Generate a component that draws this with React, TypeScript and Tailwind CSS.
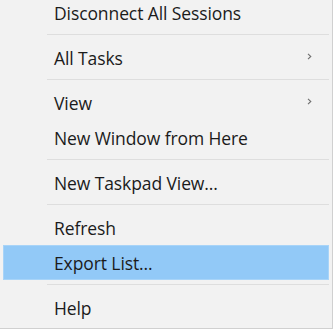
import React from "react";

type Entry = { label: string; sub?: boolean; active?: boolean } | "sep";

const entries: Entry[] = [
  { label: "Disconnect All Sessions" },
  "sep",
  { label: "All Tasks", sub: true },
  "sep",
  { label: "View", sub: true },
  { label: "New Window from Here" },
  "sep",
  { label: "New Taskpad View..." },
  "sep",
  { label: "Refresh" },
  { label: "Export List...", active: true },
  "sep",
  { label: "Help" },
];

function Chevron() {
  return (
    <svg width="5" height="7" viewBox="0 0 5 7" className="shrink-0">
      <path d="M1 0.8 L3.8 3.5 L1 6.2" fill="none" stroke="#6f6f6f" strokeWidth="1.1" />
    </svg>
  );
}

export default function App() {
  return (
    <div className="w-[334px] h-[330px] bg-white overflow-hidden">
      <div
        className="w-[333px] h-[329px] bg-[#f2f2f2] border-r border-b border-[#d0d0d0] overflow-hidden"
        style={{ fontFamily: '"Open Sans", "Noto Sans", sans-serif' }}
      >
        <div className="-mt-[5px] flex flex-col">
          {entries.map((e, i) =>
            e === "sep" ? (
              <div key={i} className="h-[10px] pt-[4px]">
                <div className="h-px ml-[47px] mr-[3px] bg-[#dedede]" />
              </div>
            ) : (
              <div
                key={i}
                className={
                  "h-[35px] mx-[3px] flex items-center justify-between pl-[51px] pr-[17px] text-[17.5px] text-[#1b1b1b] " +
                  (e.active ? "bg-[#92c9f7] outline outline-1 outline-[#a8d4f8] -outline-offset-1" : "")
                }
              >
                <span className="leading-none pt-[3px] tracking-[-0.1px]">{e.label}</span>
                {e.sub ? (
                  <span className="-mt-[3px]">
                    <Chevron />
                  </span>
                ) : null}
              </div>
            )
          )}
        </div>
      </div>
    </div>
  );
}
